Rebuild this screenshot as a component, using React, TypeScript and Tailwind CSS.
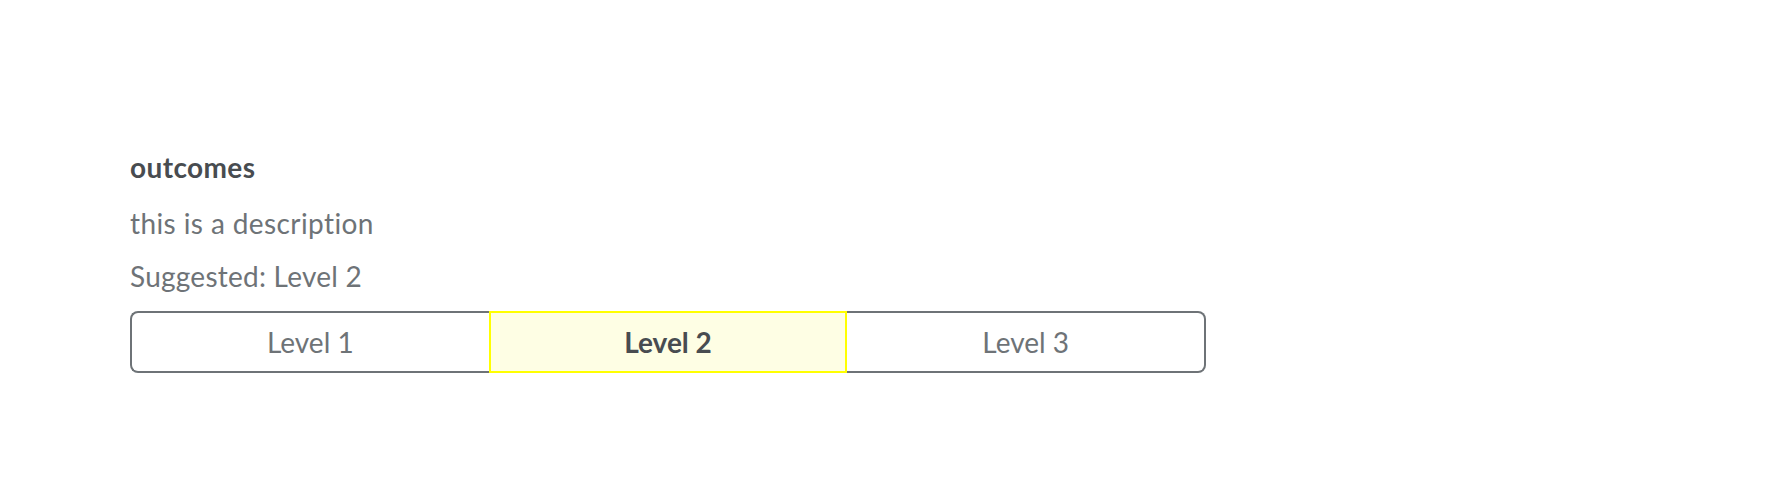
import React from 'react'

const levels = ['Level 1', 'Level 2', 'Level 3']

const OutcomeCard = () => {
  const selected = 'Level 2'

  return (
    <div className="pl-[130px] pt-[150px] font-['Lato','Noto_Sans',sans-serif] text-[28px] leading-[34px] text-[#6e7377] [font-variant-ligatures:none]">
      <h2 className="font-bold text-[#484c50] tracking-[0.4px]">outcomes</h2>
      <p className="mt-[22px] tracking-[0.4px]">this is a description</p>
      <p className="mt-[19px] tracking-[0.25px]">Suggested: Level 2</p>
      <div className="mt-[18px] grid w-[1076px] h-[62px] grid-cols-3">
        {levels.map((level, i) => {
          const active = level === selected
          let cls = 'border-y-2 border-[#6e7377] bg-white text-[#6e7377]'
          if (i === 0) cls += ' border-l-2 rounded-l-lg'
          if (i === levels.length - 1) cls += ' border-r-2 rounded-r-lg'
          if (active) cls = 'border-2 border-[#ffff00] bg-[#fefee4] font-bold text-[#484c50]'
          return (
            <button key={level} className={`flex items-center justify-center ${cls}`}>
              {level}
            </button>
          )
        })}
      </div>
    </div>
  )
}

export default function App() {
  return (
    <div className="min-h-screen bg-white">
      <OutcomeCard />
    </div>
  )
}
